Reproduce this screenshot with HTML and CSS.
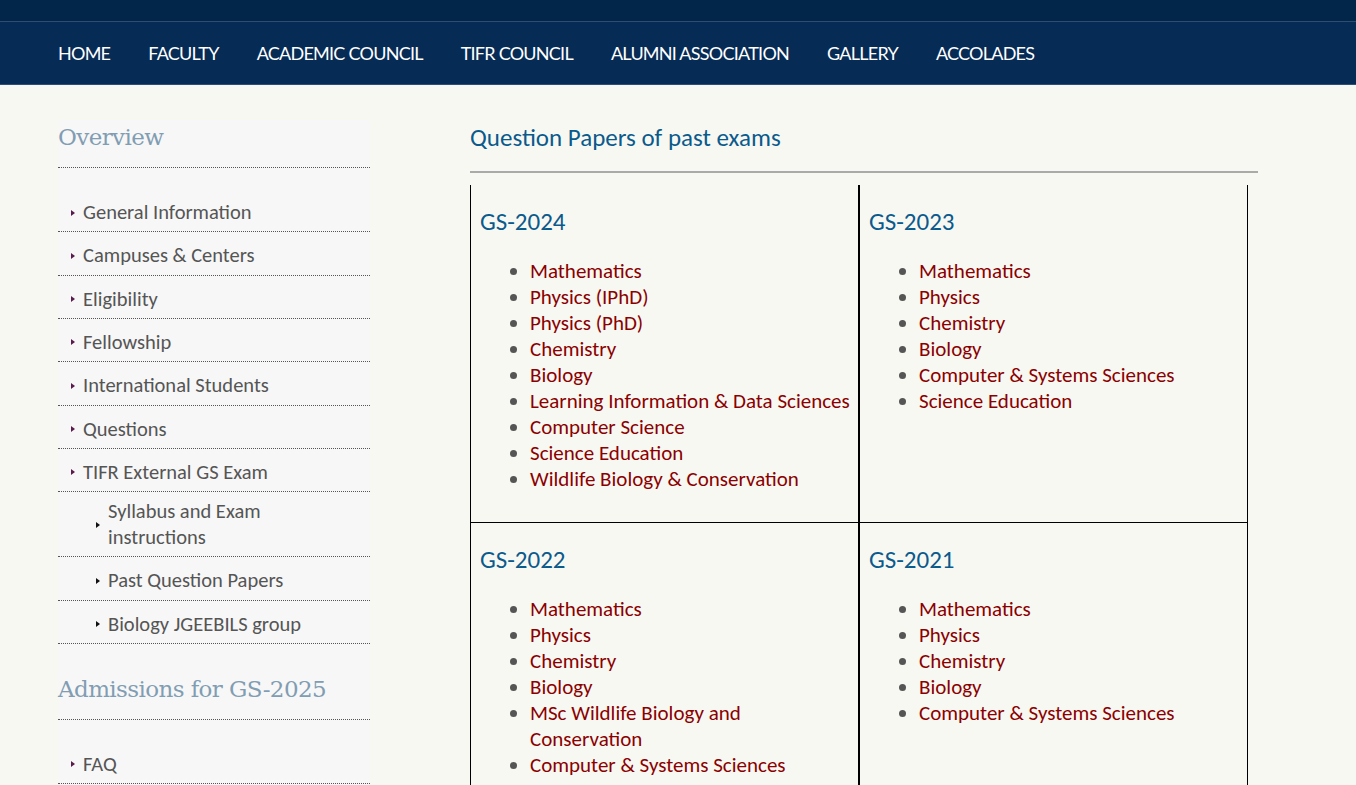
FILE: index.html
```html
<!DOCTYPE html>
<html>
<head>
<meta charset="utf-8">
<link rel="stylesheet" href="styles.css">
</head>
<body>
<div class="topbar"></div>
<nav class="nav">
  <a href="#">HOME</a>
  <a href="#">FACULTY</a>
  <a href="#">ACADEMIC COUNCIL</a>
  <a href="#">TIFR COUNCIL</a>
  <a href="#">ALUMNI ASSOCIATION</a>
  <a href="#">GALLERY</a>
  <a href="#">ACCOLADES</a>
</nav>
<div class="page">
  <aside class="sidebar">
    <h2 class="side-title">Overview</h2>
    <ul class="side-list">
      <li><a href="#">General Information</a></li>
      <li><a href="#">Campuses &amp; Centers</a></li>
      <li><a href="#">Eligibility</a></li>
      <li><a href="#">Fellowship</a></li>
      <li><a href="#">International Students</a></li>
      <li><a href="#">Questions</a></li>
      <li><a href="#">TIFR External GS Exam</a></li>
      <li class="sub wrap"><a href="#">Syllabus and Exam instructions</a></li>
      <li class="sub"><a href="#">Past Question Papers</a></li>
      <li class="sub"><a href="#">Biology JGEEBILS group</a></li>
    </ul>
    <h2 class="side-title">Admissions for GS-2025</h2>
    <ul class="side-list">
      <li><a href="#">FAQ</a></li>
    </ul>
  </aside>
  <main class="main">
    <h1 class="main-title">Question Papers of past exams</h1>
    <hr class="rule">
    <table class="papers">
      <tr>
        <td class="top left">
          <h3>GS-2024</h3>
          <ul>
            <li><a href="#">Mathematics</a></li>
            <li><a href="#">Physics (IPhD)</a></li>
            <li><a href="#">Physics (PhD)</a></li>
            <li><a href="#">Chemistry</a></li>
            <li><a href="#">Biology</a></li>
            <li><a href="#">Learning Information &amp; Data Sciences</a></li>
            <li><a href="#">Computer Science</a></li>
            <li><a href="#">Science Education</a></li>
            <li><a href="#">Wildlife Biology &amp; Conservation</a></li>
          </ul>
        </td>
        <td class="top right">
          <h3>GS-2023</h3>
          <ul>
            <li><a href="#">Mathematics</a></li>
            <li><a href="#">Physics</a></li>
            <li><a href="#">Chemistry</a></li>
            <li><a href="#">Biology</a></li>
            <li><a href="#">Computer &amp; Systems Sciences</a></li>
            <li><a href="#">Science Education</a></li>
          </ul>
        </td>
      </tr>
      <tr>
        <td class="left">
          <h3>GS-2022</h3>
          <ul>
            <li><a href="#">Mathematics</a></li>
            <li><a href="#">Physics</a></li>
            <li><a href="#">Chemistry</a></li>
            <li><a href="#">Biology</a></li>
            <li><a href="#">MSc Wildlife Biology and Conservation</a></li>
            <li><a href="#">Computer &amp; Systems Sciences</a></li>
          </ul>
        </td>
        <td class="right">
          <h3>GS-2021</h3>
          <ul>
            <li><a href="#">Mathematics</a></li>
            <li><a href="#">Physics</a></li>
            <li><a href="#">Chemistry</a></li>
            <li><a href="#">Biology</a></li>
            <li><a href="#">Computer &amp; Systems Sciences</a></li>
          </ul>
        </td>
      </tr>
    </table>
  </main>
</div>
</body>
</html>
```

FILE: styles.css
```css
* { box-sizing: border-box; }
html, body { margin: 0; padding: 0; }
body {
  background: #f8f8f3;
  font-family: "Carlito", "Lato", sans-serif;
  color: #555;
}
a { text-decoration: none; }

.topbar {
  height: 22px;
  background: #02264a;
  border-bottom: 1px solid #2d4d73;
}
.nav {
  height: 63px;
  background: #062b55;
  border-bottom: 1px solid #2e4e76;
  display: flex;
  align-items: center;
  padding-left: 58px;
  gap: 38px;
}
.nav a {
  color: #fff;
  font-family: "Lato", sans-serif;
  font-size: 18px;
  letter-spacing: -0.75px;
  line-height: 22px;
  padding-bottom: 1px;
}

.page {
  display: flex;
  padding: 35px 0 0 58px;
  gap: 100px;
}
.sidebar {
  width: 312px;
  flex: none;
  background: #f7f7f7;
  min-height: 700px;
}
.side-title {
  margin: 0;
  font-family: "DejaVu Serif", "Liberation Serif", serif;
  font-weight: normal;
  font-size: 23px;
  letter-spacing: -0.6px;
  color: #819db3;
  line-height: 32px;
  padding: 1px 0 14px;
  border-bottom: 1px dotted #555;
}
.side-list {
  list-style: none;
  margin: 21px 0 28px;
  padding: 0;
}
.side-list li {
  display: flex;
  align-items: center;
  border-bottom: 1px dotted #555;
  padding: 11px 0 7.33px 13px;
  line-height: 24px;
  font-size: 20.5px;
}
.side-list li::before {
  content: "";
  flex: none;
  width: 0;
  height: 0;
  margin-right: 8px;
  margin-top: 1px;
  border-left: 4px solid #5b1a4e;
  border-top: 3.5px solid transparent;
  border-bottom: 3.5px solid transparent;
}
.side-list li.sub {
  padding-left: 38px;
  padding-right: 30px;
}
.side-list li.wrap {
  padding-top: 6px;
  padding-bottom: 6px;
  line-height: 26px;
}
.side-list li.sub::before {
  border-left-color: #111;
}
.side-list a { color: #555; }

.main {
  width: 788px;
  flex: none;
}
.main-title {
  margin: 0;
  font-size: 25px;
  font-weight: normal;
  color: #0b5a8c;
  line-height: 36px;
}
.rule {
  margin: 15px 0 12px;
  border: 0;
  border-top: 2px solid #aaa;
  height: 0;
}
.papers {
  width: 778px;
  border-collapse: separate;
  border-spacing: 0;
  table-layout: fixed;
}
.papers td {
  vertical-align: top;
  padding: 0 4px 30px 9px;
}
.papers td.left {
  width: 390px;
  border-left: 1px solid #000;
  border-right: 2px solid #000;
}
.papers td.right {
  width: 388px;
  border-right: 1px solid #000;
}
.papers td.top { border-bottom: 1px solid #000; }
.papers h3 {
  margin: 23px 0 0;
  font-size: 25px;
  font-weight: normal;
  color: #0b5a8c;
  line-height: 28px;
}
.papers ul {
  margin: 22px 0 0;
  padding-left: 50px;
  color: #555;
}
.papers li {
  font-size: 21px;
  line-height: 26px;
}
.papers li a { color: #8b0000; }
```
